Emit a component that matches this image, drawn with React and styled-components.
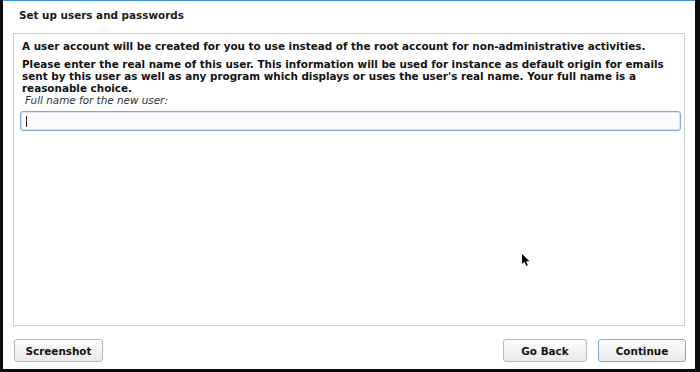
import React from "react";
import styled, { createGlobalStyle } from "styled-components";

const GlobalStyle = createGlobalStyle`
  html, body {
    margin: 0;
    padding: 0;
    background: #0c0c0c;
  }
  body {
    font-family: "DejaVu Sans", "Liberation Sans", sans-serif;
  }
`;

const Screen = styled.div`
  width: 700px;
  height: 372px;
  box-sizing: border-box;
  padding: 0 5px 3px 3px;
  background: #0c0c0c;
  display: flex;
  position: relative;
`;

const Window = styled.div`
  flex: 1;
  display: flex;
  flex-direction: column;
  background: #ffffff;
  border-top: 1px solid #3d8fd6;
`;

const Title = styled.h1`
  margin: 0;
  padding: 8px 0 0 16px;
  height: 24px;
  font-size: 10.4px;
  line-height: 12px;
  font-weight: bold;
  color: #1a1a1a;
`;

const Panel = styled.div`
  flex: 1;
  margin: 0 10px;
  border: 1px solid #cfcfcf;
  padding: 6px 3px 0 8px;
  display: flex;
  flex-direction: column;
`;

const Paragraph = styled.p`
  margin: 0 0 6px;
  font-size: 10.4px;
  line-height: 12px;
  font-weight: bold;
  color: #111;
`;

const Label = styled.div`
  font-size: 10.4px;
  line-height: 12px;
  font-style: italic;
  color: #333;
  padding-left: 3px;
  margin-top: -6px;
`;

const Input = styled.div`
  margin: 5px 0 0 -2px;
  height: 20px;
  box-sizing: border-box;
  border: 1px solid #7fa7d8;
  border-radius: 3px;
  box-shadow: inset 0 0 0 1px #d6e4f5;
  background: #fbfbfb;
  display: flex;
  align-items: center;
  padding-left: 5px;
`;

const Caret = styled.span`
  width: 1px;
  height: 11px;
  background: #222;
`;

const Footer = styled.div`
  display: flex;
  align-items: center;
  padding: 13px 9px 7px 11px;
  gap: 11px;
`;

const Spacer = styled.div`
  flex: 1;
`;

const Button = styled.button`
  width: ${(p) => p.$w}px;
  height: 23px;
  box-sizing: border-box;
  border: 1px solid ${(p) => (p.$focus ? "#86a9d6" : "#b9b9b9")};
  border-radius: 3px;
  background: linear-gradient(#fdfdfd, #e9e9e9);
  font-family: "DejaVu Sans", "Liberation Sans", sans-serif;
  font-size: 10.4px;
  font-weight: bold;
  color: #111;
  padding: 0;
`;

const Pointer = styled.svg`
  position: absolute;
  left: 522px;
  top: 254px;
`;

export default function App() {
  return (
    <>
      <GlobalStyle />
      <Screen>
        <Window>
          <Title>Set up users and passwords</Title>
          <Panel>
            <Paragraph>
              A user account will be created for you to use instead of the root
              account for non-administrative activities.
            </Paragraph>
            <Paragraph>
              Please enter the real name of this user. This information will be
              used for instance as default origin for emails sent by this user
              as well as any program which displays or uses the user's real
              name. Your full name is a reasonable choice.
            </Paragraph>
            <Label>Full name for the new user:</Label>
            <Input>
              <Caret />
            </Input>
          </Panel>
          <Footer>
            <Button $w={89}>Screenshot</Button>
            <Spacer />
            <Button $w={84}>Go Back</Button>
            <Button $w={88} $focus>
              Continue
            </Button>
          </Footer>
        </Window>
        <Pointer width="9" height="13" viewBox="0 0 9 13">
          <path d="M0 0 L0 10 L2.5 7.8 L4.3 12 L5.8 11.3 L4 7.2 L7.5 7.2 Z" fill="#000" />
        </Pointer>
      </Screen>
    </>
  );
}
